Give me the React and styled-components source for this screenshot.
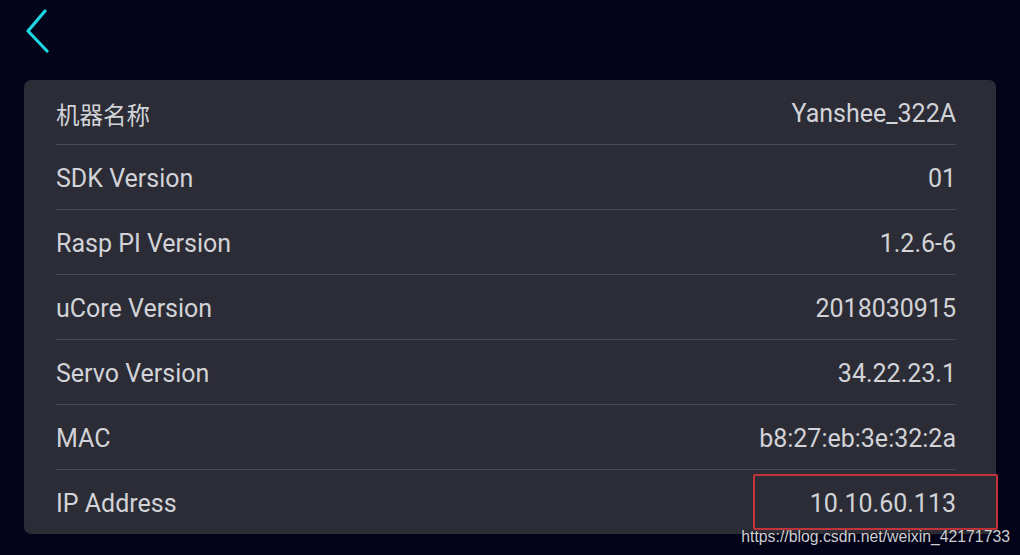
import React from "react";
import styled, { createGlobalStyle } from "styled-components";

const Global = createGlobalStyle`
  html, body { margin: 0; padding: 0; }
  body {
    background: #03031a;
    width: 1020px;
    height: 555px;
    overflow: hidden;
    font-family: Roboto, "Noto Sans CJK SC", sans-serif;
  }
`;

const Screen = styled.div`
  position: relative;
  width: 1020px;
  height: 555px;
  background: #03031a;
  box-sizing: border-box;
  padding: 0 24px;
  display: flex;
  flex-direction: column;
`;

const TopBar = styled.div`
  height: 80px;
  display: flex;
  align-items: flex-start;
`;

const BackButton = styled.button`
  margin: 9px 0 0 1px;
  padding: 0;
  border: 0;
  background: none;
  width: 26px;
  height: 44px;
  cursor: pointer;
`;

const Card = styled.div`
  background: #2b2c35;
  border-radius: 7px;
  padding: 0 40px 0 32px;
  height: 454px;
  box-sizing: border-box;
  display: flex;
  flex-direction: column;
`;

const Row = styled.div`
  height: ${(p) => (p.$last ? "64px" : "65px")};
  display: flex;
  align-items: center;
  justify-content: space-between;
  border-bottom: ${(p) => (p.$last ? "none" : "1px solid #474850")};
  padding-top: ${(p) => (p.$last ? "3px" : "3px")};
  box-sizing: border-box;
  flex: none;
`;

const Label = styled.span`
  font-size: 25px;
  color: #d2d3d8;
  &:lang(zh) { font-size: 23.5px; }
`;

const Value = styled.span`
  font-size: 25px;
  color: #d2d3d8;
`;

const Highlight = styled.div`
  position: absolute;
  left: 753px;
  top: 474px;
  width: 245px;
  height: 56px;
  border: 2px solid #c3333b;
  box-sizing: border-box;
  border-radius: 2px;
  pointer-events: none;
`;

const Watermark = styled.div`
  position: absolute;
  right: 10px;
  bottom: 9px;
  font-family: "Liberation Sans", Arial, sans-serif;
  font-size: 15.8px;
  color: rgba(235, 235, 240, 0.88);
  text-shadow: 0 0 2px rgba(0, 0, 0, 0.6);
`;

const rows = [
  ["机器名称", "Yanshee_322A", "zh"],
  ["SDK Version", "01"],
  ["Rasp PI Version", "1.2.6-6"],
  ["uCore Version", "2018030915"],
  ["Servo Version", "34.22.23.1"],
  ["MAC", "b8:27:eb:3e:32:2a"],
  ["IP Address", "10.10.60.113"],
];

export default function App() {
  return (
    <>
      <Global />
      <Screen>
        <TopBar>
          <BackButton aria-label="back">
            <svg width="26" height="44" viewBox="0 0 26 44">
              <polyline
                points="20,2 3,22 22,42"
                fill="none"
                stroke="#1fd5df"
                strokeWidth="3.2"
                strokeLinecap="round"
                strokeLinejoin="round"
              />
            </svg>
          </BackButton>
        </TopBar>
        <Card>
          {rows.map(([k, v, lang], i) => (
            <Row key={k} $last={i === rows.length - 1}>
              <Label lang={lang}>{k}</Label>
              <Value>{v}</Value>
            </Row>
          ))}
        </Card>
        <Highlight />
        <Watermark>https://blog.csdn.net/weixin_42171733</Watermark>
      </Screen>
    </>
  );
}
